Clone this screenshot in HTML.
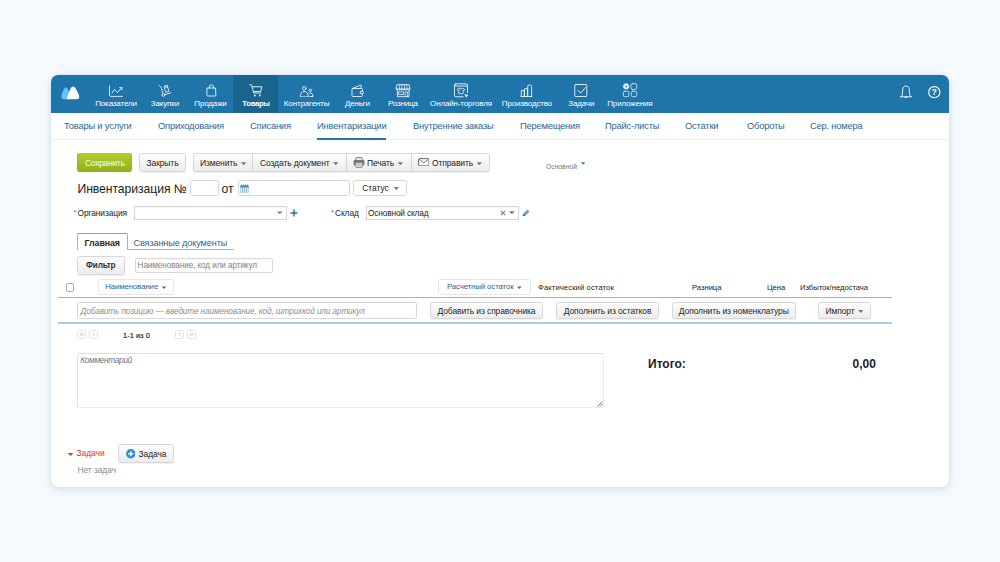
<!DOCTYPE html>
<html lang="ru">
<head>
<meta charset="utf-8">
<title>Инвентаризация</title>
<style>
*{box-sizing:border-box;margin:0;padding:0}
html,body{width:1000px;height:562px;overflow:hidden}
body{background:#f5fafe;font-family:"Liberation Sans",sans-serif;font-size:9px;color:#222;position:relative}
.card{position:absolute;left:51px;top:75px;width:898px;height:412px;background:#fff;border-radius:7px;box-shadow:0 2px 9px rgba(100,145,185,.28),0 0 2px rgba(100,145,185,.15);}
.top{position:absolute;left:0;top:0;width:898px;height:38px;background:#1f74aa;border-radius:7px 7px 0 0;overflow:hidden}
.nav{position:absolute;top:0;height:38px;text-align:center;color:#fff;font-size:8px;letter-spacing:-.15px}
.nav span{position:absolute;left:-20px;right:-20px;top:23.5px;line-height:9px;white-space:nowrap}
.nav svg{position:absolute;left:50%;top:7.5px;width:16px;height:16px;margin-left:-8px;fill:none;stroke:#fff;stroke-width:.9;stroke-linecap:round;stroke-linejoin:round;overflow:visible;opacity:.93}
.nav.act{font-weight:bold;font-size:7.7px;letter-spacing:-.3px}
.sub{position:absolute;left:0;top:38px;width:898px;height:27px;border-bottom:1px solid #eceef0;background:#fff}
.sub a{position:absolute;top:6.5px;font-size:9.3px;line-height:12px;color:#2a6598;white-space:nowrap;letter-spacing:-.17px}
.sub a.act:after{content:"";position:absolute;left:0;right:0;bottom:-8px;height:2px;background:#1f74aa}
.abs{position:absolute;white-space:nowrap}
.btn{position:absolute;height:19px;border:1px solid #d7d7d7;border-radius:2.5px;background:linear-gradient(#fdfdfd,#ececec);font-size:8.5px;letter-spacing:-.12px;line-height:18.5px;text-align:center;color:#262626;white-space:nowrap;box-shadow:0 .5px .8px rgba(0,0,0,.06)}
.car{display:inline-block;width:5.4px;height:3px;background:#787878;clip-path:polygon(0 0,100% 0,50% 100%);vertical-align:middle;margin-left:3.5px;margin-top:-.5px}
.tri{position:absolute;clip-path:polygon(0 0,100% 0,50% 100%)}
.inp{position:absolute;border:1px solid #d8d8d8;border-radius:1.5px;background:#fff;box-shadow:inset 0 .6px .8px rgba(0,0,0,.05)}
.lbl{position:absolute;font-size:8.4px;letter-spacing:-.1px;line-height:11px;white-space:nowrap;color:#222}
.wbtn{position:absolute;height:16px;border:1px solid #e4e7ea;border-radius:2.5px;background:#fff;font-size:7.8px;letter-spacing:-.1px;line-height:14px;text-align:center;color:#2a6598;white-space:nowrap}
.th{position:absolute;top:208px;font-size:7.6px;line-height:10px;color:#222;white-space:nowrap}
.pg{position:absolute;top:255.3px;width:9px;height:9.2px;border:1px solid #e4e4e4;border-radius:1.5px;font-size:9px;line-height:6.9px;color:#c8c8c8;text-align:center}
</style>
</head>
<body>
<div class="card">
  <div class="top">
    <svg class="abs" style="left:10px;top:11px" width="19" height="14" viewBox="0 0 19 14"><path d="M.4 10.800C.4 8 2 4.500 3 2.800 3.600 1.800 4.200 1.400 4.900 1.400 5.800 1.400 6.400 2.200 7 3.400L8.500 6.500 5.800 13.200H2.500C1.100 13.200 .4 12.200 .4 10.800z" fill="#62c3f2"/><path d="M5.300 13.200L9.300 3C10 1.200 11 .4 12 .4 13.200 .4 14.200 1.500 15 3 16.500 5.800 18.200 9 18.200 11 18.200 12.400 17.400 13.200 16 13.200z" fill="#fff"/></svg>
    <div class="abs" style="left:182px;top:0;width:45px;height:38px;background:#1b6490"></div>
    <div class="nav" style="left:35.00px;width:60px"><svg viewBox="0 0 16 16"><path d="M1.500 3v9.200a1.200 1.200 0 0 0 1.200 1.200h11.800"/><path d="M4.100 10l2.300-3.500 3.100 2.900 4.200-4.500"/><path d="M11.600 4.600h2.300v2.300"/></svg><span>Показатели</span></div>
    <div class="nav" style="left:83.90px;width:60px"><svg viewBox="0 0 16 16"><path d="M1.900 2.500c1.500.5 2.200 1.400 2.600 2.900l1.300 5"/><circle cx="6.300" cy="12" r="1.400"/><path d="M7.700 11.600l6.200-1.800"/><path d="M7.400 3.300l2.900-.8 1.600 5.800-2.900.8z" stroke-width=".85"/><path d="M8.700 2.900l.5 1.900 1.300-.4-.5-1.900" stroke-width=".7"/></svg><span>Закупки</span></div>
    <div class="nav" style="left:129.50px;width:60px"><svg viewBox="0 0 16 16"><path d="M4.300 5h8.200l.4 7.200a.8.8 0 0 1-.8.800h-7.400a.8.8 0 0 1-.8-.8z"/><path d="M6.300 5v-1a2.100 2.100 0 0 1 4.200 0v1"/></svg><span>Продажи</span></div>
    <div class="nav act" style="left:175.00px;width:60px"><svg viewBox="0 0 16 16"><path d="M1.800 1.800h1.700l2.300 8.200h7"/><path d="M4.100 3.800h9.900l-1.300 4.700h-7.300"/><circle cx="6.800" cy="12.500" r=".9" fill="#fff" stroke="none"/><circle cx="11.800" cy="12.500" r=".9" fill="#fff" stroke="none"/></svg><span>Товары</span></div>
    <div class="nav" style="left:225.60px;width:60px"><svg viewBox="0 0 16 16"><circle cx="5.250" cy="5.300" r="1.800"/><path d="M1.300 13.500c0-3.200 1.500-5 4-5s4 1.800 4 5z"/><circle cx="11.300" cy="7.400" r="1.300"/><path d="M10.200 10.100c2.400-.5 3.800.9 3.800 3.400h-3.100"/></svg><span>Контрагенты</span></div>
    <div class="nav" style="left:276.40px;width:60px"><svg viewBox="0 0 16 16"><path d="M3.200 5.500l8.900-3.500v3.500"/><rect x="3" y="5.5" width="10.5" height="8" rx="1"/><rect x="11.100" y="8.400" width="3.200" height="2.400" rx=".9" fill="#1f74aa"/></svg><span>Деньги</span></div>
    <div class="nav" style="left:321.90px;width:60px"><svg viewBox="0 0 16 16"><path d="M2.300 1.700h11.800l.9 4.300h-13.700z"/><path d="M4.800 1.700l-.5 4.300M7 1.700l-.2 4.300M9.400 1.700l.2 4.300M11.600 1.700l.5 4.300" stroke-width=".7"/><path d="M1.300 6a1.140 1.140 0 0 0 2.280 0a1.140 1.140 0 0 0 2.280 0a1.140 1.140 0 0 0 2.280 0a1.140 1.140 0 0 0 2.280 0a1.140 1.140 0 0 0 2.280 0a1.140 1.140 0 0 0 2.280 0" stroke-width=".8"/><path d="M2.400 7.600v6.100h11.600v-6.100"/><rect x="4" y="8.900" width="4.600" height="2.600" stroke-width=".8"/><path d="M10.100 13.700v-4.800h2.300v4.800" stroke-width=".8"/></svg><span>Розница</span></div>
    <div class="nav" style="left:380.00px;width:60px"><svg viewBox="0 0 16 16"><rect x="1.500" y=".8" width="13" height="13" rx="1.300"/><path d="M1.500 3h13"/><path d="M6.300 5.300l-2 1.100.8 1.400.7-.4v3.300h4.400v-3.300l.7.400.8-1.400-2-1.100c-.7.900-2.700.9-3.400 0z" stroke-width=".8"/><rect x="10.6" y="10" width="5.5" height="5.5" fill="#1f74aa" stroke="none"/><path d="M11.4 10.7l4.4 1.7-1.8.8-.8 1.8z" fill="#fff" stroke="none"/></svg><span>Онлайн-торговля</span></div>
    <div class="nav" style="left:446.00px;width:60px"><svg viewBox="0 0 16 16"><path d="M2.300 13.500v-6h3.100v6M5.400 13.500v-7.700h3.200v7.700M8.700 13.500v-10a1.500 1.500 0 0 1 1.500-1.500h.9a1.500 1.500 0 0 1 1.500 1.500v10"/><path d="M2 13.5h10.9"/></svg><span>Производство</span></div>
    <div class="nav" style="left:500.25px;width:60px"><svg viewBox="0 0 16 16"><rect x="1.800" y="1.500" width="12" height="12" rx=".6"/><path d="M5 7.400l2.700 2.800 4.700-5.700"/></svg><span>Задачи</span></div>
    <div class="nav" style="left:548.90px;width:60px"><svg viewBox="0 0 16 16"><g transform="translate(0,-.5)"><circle cx="4.100" cy="3.900" r="1.750" stroke-width="1.700"/><circle cx="4.100" cy="3.900" r="2.750" stroke-width=".8" stroke-dasharray="1.100 1.060"/><rect stroke-opacity=".85" x="8.900" y="1.100" width="5.800" height="5.900" rx="1.800"/><rect stroke-opacity=".85" x="1.400" y="8.800" width="5.400" height="5.400" rx="1.200"/><rect stroke-opacity=".85" x="9.300" y="8.800" width="5.400" height="5.400" rx="1.200"/></g></svg><span>Приложения</span></div>
    <svg class="abs" style="left:848px;top:10px;fill:none;stroke:#fff;stroke-width:.9;stroke-linejoin:round;stroke-linecap:round" width="16" height="15" viewBox="0 0 16 15"><path d="M1.300 11.800h11.400M2.300 11.600c1.300-1.300 1.200-3.400 1.400-6.400a3.300 4.200 0 0 1 6.600 0c.2 3 .1 5.100 1.400 6.400"/><path d="M5.800 12.200c.4 1.100 2 1.100 2.400 0z" fill="#fff" stroke-width=".5"/></svg>
    <svg class="abs" style="left:876px;top:9.8px" width="15" height="15" viewBox="0 0 15 15"><circle cx="7.300" cy="7.200" r="5.600" fill="none" stroke="#fff" stroke-width="1.100"/><text x="7.300" y="10.100" font-family="Liberation Sans, sans-serif" font-size="8.200" font-weight="bold" fill="#fff" text-anchor="middle">?</text></svg>
  </div>
  <div class="sub">
    <a style="left:13px">Товары и услуги</a>
    <a style="left:107px">Оприходования</a>
    <a style="left:199px">Списания</a>
    <a class="act" style="left:266px">Инвентаризации</a>
    <a style="left:362px">Внутренние заказы</a>
    <a style="left:469px">Перемещения</a>
    <a style="left:554px">Прайс-листы</a>
    <a style="left:634px">Остатки</a>
    <a style="left:696px">Обороты</a>
    <a style="left:759px">Сер. номера</a>
  </div>

  <!-- toolbar -->
  <div class="btn" style="left:26.3px;top:78.2px;width:55px;height:18.6px;line-height:18.2px;border-color:#a9c82a #98bc20 #8ab21a;background:linear-gradient(#b1cd2c,#8cb41b);color:#fff;text-shadow:0 -.5px 0 rgba(0,0,0,.12);letter-spacing:-.3px;box-shadow:none">Сохранить</div>
  <div class="btn" style="left:88px;top:78px;width:47px">Закрыть</div>
  <div class="btn" style="left:141.500px;top:78px;width:297px;"></div>
  <div class="abs" style="left:149px;top:79.2px;line-height:19px;font-size:8.5px;letter-spacing:-.12px">Изменить<i class="car"></i></div>
  <div class="abs" style="left:201px;top:79px;width:1px;height:17px;background:#d4d4d4"></div>
  <div class="abs" style="left:209px;top:79.2px;line-height:19px;font-size:8.5px;letter-spacing:-.12px">Создать документ<i class="car"></i></div>
  <div class="abs" style="left:295px;top:79px;width:1px;height:17px;background:#d4d4d4"></div>
  <svg class="abs" style="left:302px;top:82px" width="12" height="11" viewBox="0 0 12 11"><rect x="2.700" y=".6" width="6.600" height="3.400" rx=".8" fill="#ececec" stroke="#6e6e6e" stroke-width=".9"/><rect x=".5" y="3" width="11" height="5.400" rx="1.400" fill="#767676"/><rect x="2.700" y="5.700" width="6.600" height="4.700" rx=".5" fill="#e4e4e4" stroke="#808080" stroke-width=".8"/><path d="M4 7.500h4M4 8.800h4" stroke="#a5a5a5" stroke-width=".5"/></svg>
  <div class="abs" style="left:316px;top:79.2px;line-height:19px;font-size:8.5px;letter-spacing:-.12px">Печать<i class="car"></i></div>
  <div class="abs" style="left:359.500px;top:79px;width:1px;height:17px;background:#d4d4d4"></div>
  <svg class="abs" style="left:366.7px;top:82.700px" width="11.500" height="8.500" viewBox="0 0 11.500 8.500"><rect x=".6" y=".6" width="10.300" height="7.300" rx="1.200" fill="#fafafa" stroke="#606060" stroke-width=".95"/><path d="M1.100 1.200l4.650 3.700 4.650-3.700" fill="none" stroke="#606060" stroke-width=".85"/></svg>
  <div class="abs" style="left:381px;top:79.2px;line-height:19px;font-size:8.5px;letter-spacing:-.12px">Отправить<i class="car"></i></div>

  <div class="abs" style="left:495px;top:87.5px;font-size:6.75px;line-height:8px;color:#777">Основной</div>
  <i class="tri" style="left:529.8px;top:87.2px;width:4.6px;height:2.6px;background:#2a7ab8"></i>

  <!-- title row -->
  <div class="abs" style="left:26.5px;top:105px;font-size:12.2px;line-height:18px;color:#222;letter-spacing:-.07px">Инвентаризация №</div>
  <div class="inp" style="left:139px;top:105px;width:29px;height:15.500px"></div>
  <div class="abs" style="left:170.500px;top:105px;font-size:12.2px;line-height:18px;color:#222">от</div>
  <div class="inp" style="left:186.500px;top:105px;width:112.500px;height:15.500px"></div>
  <svg class="abs" style="left:189px;top:108.800px" width="9" height="9" viewBox="0 0 9 9"><rect x=".4" y="2.200" width="8.200" height="6.500" rx=".9" fill="#e2eef7" stroke="#94bddc" stroke-width=".7"/><path d="M.3 3.400v-1.100a.9.900 0 0 1 .9-.9h6.600a.9.900 0 0 1 .9.900v1.100z" fill="#3f84b7"/><path d="M0.7 1.800l.75-1.700.75 1.700zM2.8 1.800l.75-1.700.75 1.700zM4.8 1.800l.75-1.700.75 1.700zM6.8 1.800l.75-1.700.75 1.700z" fill="#3f84b7"/><g fill="#4a8cbe"><circle cx="2.45" cy="4.9" r=".58"/><circle cx="4.5" cy="4.9" r=".58"/><circle cx="6.55" cy="4.9" r=".58"/><circle cx="2.45" cy="6.95" r=".58"/><circle cx="4.5" cy="6.95" r=".58"/><circle cx="6.55" cy="6.95" r=".58"/></g></svg>
  <div class="inp" style="left:302px;top:105px;width:54px;height:15.500px;font-size:8.4px;line-height:15.5px;padding-left:8.2px;color:#222">Статус<i class="car" style="margin-left:5px"></i></div>

  <!-- org row -->
  <div class="lbl" style="left:22.5px;top:132.7px"><span style="color:#e0491b;font-size:8px;position:relative;top:-1px;margin-right:1px">*</span>Организация</div>
  <div class="inp" style="left:83px;top:131px;width:153px;height:14px;border-color:#d4d4d4;border-radius:0"></div>
  <i class="tri" style="left:226px;top:136.4px;width:5.5px;height:2.8px;background:#787878"></i>
  <svg class="abs" style="left:239px;top:134px" width="8" height="8" viewBox="0 0 8 8"><path d="M4 .5v7M.5 4h7" stroke="#1f74aa" stroke-width="1.400"/></svg>
  <div class="lbl" style="left:280px;top:132.7px"><span style="color:#e0491b;font-size:8px;position:relative;top:-1px;margin-right:1px">*</span>Склад</div>
  <div class="inp" style="left:314.500px;top:131px;width:153px;height:14px;border-color:#d4d4d4;border-radius:0;font-size:8.3px;letter-spacing:-.15px;line-height:13.2px;padding-left:1.5px;color:#222">Основной склад</div>
  <svg class="abs" style="left:449.3px;top:135px" width="6" height="6" viewBox="0 0 6 6"><path d="M.8 1l4.400 4M5.200 1l-4.400 4" stroke="#8a8a8a" stroke-width="1.100"/></svg>
  <i class="tri" style="left:458px;top:136.300px;width:5.800px;height:3px;background:#787878"></i>
  <svg class="abs" style="left:471px;top:133.500px" width="8" height="8" viewBox="0 0 8 8"><path d="M1 7l.6-2.200 3.800-3.800 1.600 1.600-3.800 3.800z" fill="#5fa6e2" stroke="#3a6ea8" stroke-width=".5"/><path d="M1 7l.5-1.800 1.300 1.300z" fill="#1f3f70"/></svg>

  <!-- tabs -->
  <div class="abs" style="left:76px;top:173.500px;width:106.500px;height:1px;background:#8bbbd9"></div>
  <div class="abs" style="left:26px;top:158px;width:50.500px;height:17px;border:1px solid #8bbbd9;border-top-color:#6fa6cd;border-bottom:0;border-radius:1.500px 1.500px 0 0;background:#fff;font-size:8.9px;letter-spacing:-.12px;font-weight:bold;line-height:18.5px;text-align:center;color:#2a2a2a">Главная</div>
  <div class="abs" style="left:82.500px;top:161.5px;font-size:9.1px;letter-spacing:-.1px;line-height:12px;color:#2a6598">Связанные документы</div>

  <!-- filter -->
  <div class="btn" style="left:26px;top:180.500px;width:47.500px;font-weight:bold;font-size:8.2px;letter-spacing:-.2px;color:#333">Фильтр</div>
  <div class="inp" style="left:84px;top:183px;width:138px;height:14.500px;font-size:8.2px;letter-spacing:-.1px;line-height:14px;padding-left:1.6px;color:#828282">Наименование, код или артикул</div>

  <!-- table header -->
  <div class="abs" style="left:14.7px;top:208px;width:8.6px;height:8.6px;border:1px solid #adadad;border-radius:2px;background:#fff"></div>
  <div class="wbtn" style="left:47px;top:204px;width:75.500px">Наименование<i class="car" style="background:#2b72b0;width:4.6px;height:2.6px;margin-top:1.5px"></i></div>
  <div class="wbtn" style="left:387px;top:204px;width:92.5px">Расчетный остаток<i class="car" style="background:#2b72b0;width:4.6px;height:2.6px;margin-top:1.5px"></i></div>
  <div class="th" style="left:487px;letter-spacing:.13px">Фактический остаток</div>
  <div class="th" style="left:641px">Разница</div>
  <div class="th" style="left:716px">Цена</div>
  <div class="th" style="left:749px">Избыток/недостача</div>
  <div class="abs" style="left:7px;top:221.8px;width:833.5px;height:1.3px;background:#8ab8d8"></div>

  <div class="inp" style="left:26px;top:227.2px;width:340px;height:16.7px;font-size:8.2px;letter-spacing:-.1px;font-style:italic;line-height:17.4px;padding-left:2.6px;color:#8e8e8e">Добавить позицию — введите наименование, код, штрихкод или артикул</div>
  <div class="btn" style="left:379px;top:227px;width:113px;height:17px;line-height:16.6px">Добавить из справочника</div>
  <div class="btn" style="left:505px;top:227px;width:103px;height:17px;line-height:16.6px">Дополнить из остатков</div>
  <div class="btn" style="left:621px;top:227px;width:123.500px;height:17px;line-height:16.6px">Дополнить из номенклатуры</div>
  <div class="btn" style="left:767px;top:227px;width:53px;height:17px;line-height:16.6px">Импорт<i class="car"></i></div>
  <div class="abs" style="left:7px;top:247px;width:833.5px;height:2px;background:#aecbe1"></div>

  <!-- pager -->
  <div class="pg" style="left:26.2px">«</div>
  <div class="pg" style="left:38px">‹</div>
  <div class="abs" style="left:72px;top:256px;font-size:7.5px;line-height:10px;color:#111;-webkit-text-stroke:.15px #222">1-1 из 0</div>
  <div class="pg" style="left:124.2px">›</div>
  <div class="pg" style="left:135.9px">»</div>

  <!-- comment -->
  <div class="inp" style="left:26px;top:278px;width:527px;height:55px;border-color:#e0e0e0 #ececec #ececec #e2e2e2;box-shadow:none;font-size:8.4px;letter-spacing:-.41px;font-style:italic;line-height:11px;padding:.5px 2.3px;color:#777">Комментарий</div>
  <svg class="abs" style="left:545.500px;top:326px" width="6" height="6" viewBox="0 0 6 6"><path d="M.5 5.500l5-5M3 5.500l2.500-2.500" stroke="#555" stroke-width=".8"/></svg>

  <div class="abs" style="left:597px;top:282px;font-size:12px;font-weight:bold;line-height:15px;color:#222">Итого:</div>
  <div class="abs" style="left:801.500px;top:282px;font-size:12px;font-weight:bold;line-height:15px;color:#222">0,00</div>

  <!-- tasks -->
  <i class="tri" style="left:16.2px;top:377.6px;width:6.8px;height:3.4px;background:#d4470f"></i>
  <div class="abs" style="left:25.500px;top:372px;font-size:8.4px;line-height:12px;color:#c8421a">Задачи</div>
  <div class="btn" style="left:67px;top:369px;width:55.500px;height:18.500px"></div>
  <svg class="abs" style="left:74.500px;top:374px" width="9.500" height="9.500" viewBox="0 0 10 10"><circle cx="5" cy="5" r="5" fill="#2a8dd3"/><path d="M5 2.300v5.400M2.300 5h5.400" stroke="#fff" stroke-width="1.700"/></svg>
  <div class="abs" style="left:87.500px;top:372.500px;font-size:8.3px;line-height:12px;color:#222">Задача</div>
  <div class="abs" style="left:26.500px;top:389.5px;font-size:8.3px;line-height:11px;color:#8a8a8a">Нет задач</div>
</div>
</body>
</html>
